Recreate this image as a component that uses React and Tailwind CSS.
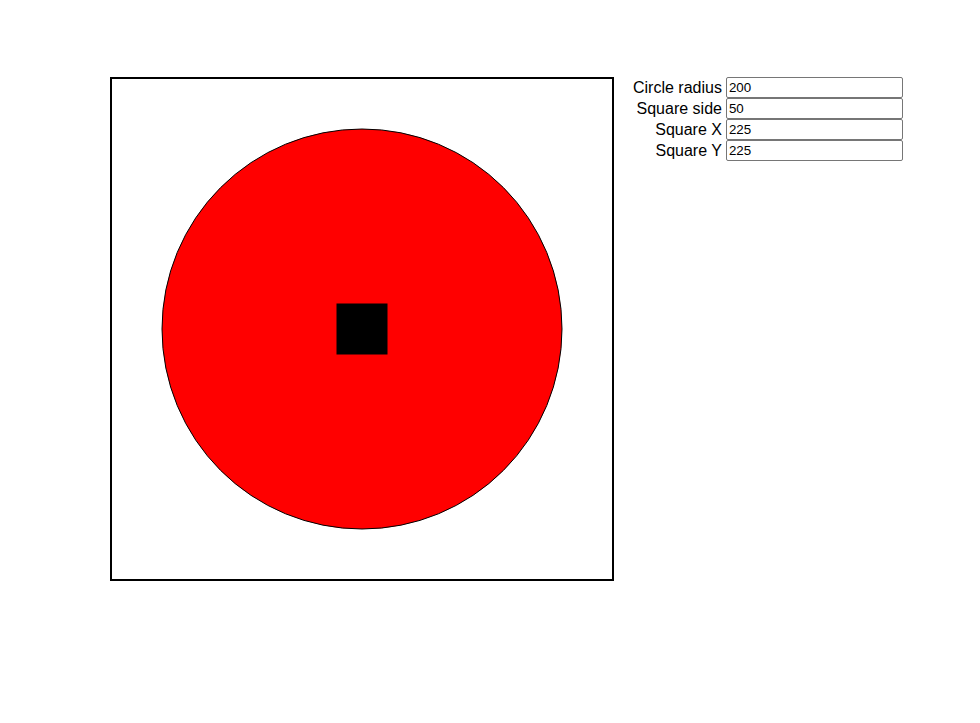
export default function App() {
  const fields = [
    { label: "Circle radius", value: "200" },
    { label: "Square side", value: "50" },
    { label: "Square X", value: "225" },
    { label: "Square Y", value: "225" },
  ];

  return (
    <div className="w-[980px] h-[723px] bg-white flex items-start pl-[110px] pt-[77px] gap-[19px] font-['Liberation_Sans',Arial,sans-serif]">
      {/* Canvas */}
      <div className="w-[504px] h-[504px] border-2 border-black shrink-0">
        <svg width="500" height="500" viewBox="0 0 500 500" className="block">
          <circle cx="250" cy="250" r="200" fill="#ff0000" stroke="#000" strokeWidth="1" />
          <rect x="225" y="225" width="50" height="50" fill="#000" stroke="#000" strokeWidth="1" />
        </svg>
      </div>

      {/* Controls */}
      <div className="grid grid-cols-[auto_auto] gap-x-[4px] items-center">
        {fields.map((f) => (
          <div key={f.label} className="contents">
            <label className="text-right text-[16px] leading-[21px] text-black">{f.label}</label>
            <input
              defaultValue={f.value}
              className="w-[177px] h-[21px] border border-[#767676] rounded-[2px] px-[2px] text-[13.33px] text-black font-['Liberation_Sans',Arial,sans-serif] outline-none"
            />
          </div>
        ))}
      </div>
    </div>
  );
}
